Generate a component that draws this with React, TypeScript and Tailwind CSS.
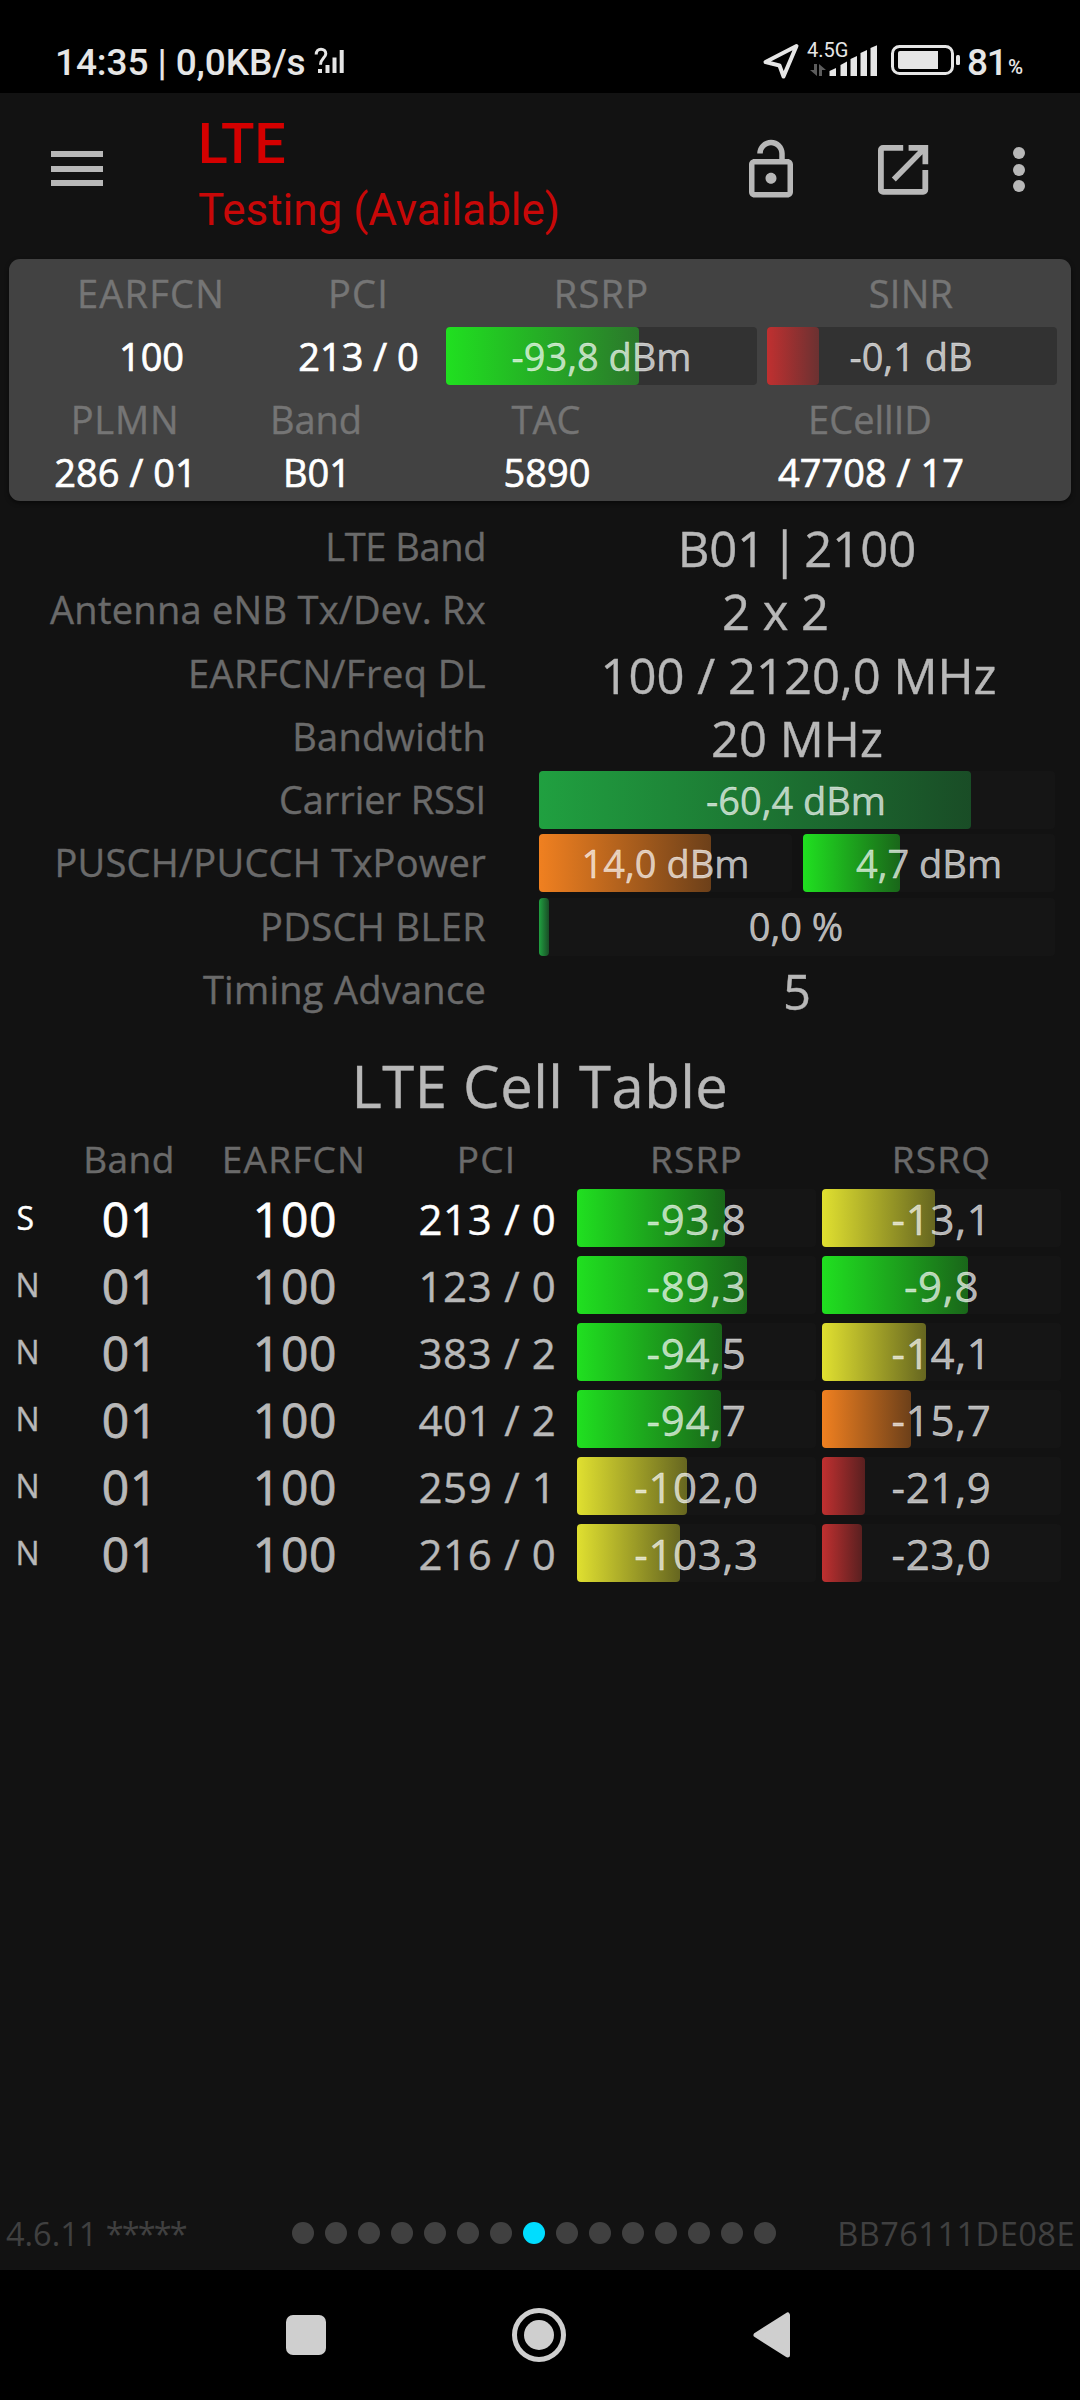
import type { ReactNode } from "react";
import { MdOutlineLockOpen } from "react-icons/md";

type Tone = "green" | "forest" | "yellow" | "orange" | "red";

const tones: Record<Tone, string> = {
  green: "from-[#20e020] to-[#20e020]/40",
  forest: "from-[#20a040] to-[#20a040]/40",
  yellow: "from-[#e0e030] to-[#e0e030]/40",
  orange: "from-[#f08020] to-[#f08020]/40",
  red: "from-[#c03030] to-[#c03030]/40",
};

function Bar({ tone, fill, className = "", children }: { tone: Tone; fill: number; className?: string; children: ReactNode }) {
  return (
    <div className={`relative flex h-[58px] shrink-0 items-center justify-center rounded-[4px] ${className}`}>
      <div className={`absolute inset-y-0 left-0 rounded-[4px] bg-linear-to-r ${tones[tone]}`} style={{ width: fill }} />
      <span className="relative whitespace-pre text-white/70">{children}</span>
    </div>
  );
}

function StatusBar() {
  return (
    <div className="flex h-[93px] shrink-0 items-start bg-black pr-[55px] pl-[55px] text-[#e6e6e6]" style={{ fontFamily: "Roboto, sans-serif" }}>
      <span className="mt-[41px] w-[259px] text-[37px] leading-[44px] font-medium tracking-[-0.1px] whitespace-nowrap">14:35 | 0,0KB/s</span>
      <svg className="mt-[47px] shrink-0" width="31" height="27" viewBox="0 0 31 27" fill="none">
        <path d="M2.200 7.500C2.200 3.800 4.200 2.200 7 2.200s4.800 1.700 4.800 4.500c0 4.300-5.300 4.800-5.300 11" stroke="#e6e6e6" strokeWidth="3" />
        <path d="M4 22h4v4H4zM11.500 18h4v8h-4zM18.500 10.500h4v15.500h-4zM25.700 3h4v23h-4z" fill="#e6e6e6" />
      </svg>
      <div className="grow" />
      <svg className="mt-[42px] shrink-0" width="38" height="39" viewBox="0 0 38 39" fill="none" stroke="#e6e6e6" strokeWidth="4" strokeLinejoin="round">
        <path d="M34.500 4L3.500 20l14 3.500 4 11z" />
      </svg>
      <div className="mt-[39px] ml-[7px] flex h-[38px] w-[22px] flex-col">
        <span className="text-[20px] leading-[23px]">4.5G</span>
        <svg className="mt-[2px] ml-[3px] shrink-0" width="17" height="12" viewBox="0 0 17 12" fill="#5c5c5c">
          <path d="M4 0h3v12L0 6h4zM9 12h3V6h4L9 0z" />
        </svg>
      </div>
      <svg className="mt-[45px] shrink-0" width="49" height="31" viewBox="0 0 49 31" fill="#e6e6e6">
        <path d="M0.500 26l6.500-3v8h-6.500zM11.500 20l6.500-3.500V31h-6.500zM21.500 14l6.500-3v20h-6.500zM31.500 8l6.500-3v26h-6.500zM41.500 3L48 .2V31h-6.500z" />
      </svg>
      <svg className="mt-[45px] ml-[13px] shrink-0" width="70" height="30" viewBox="0 0 70 30" fill="none">
        <rect x="1.500" y="1.500" width="60" height="27" rx="7" stroke="#e6e6e6" strokeWidth="3" />
        <path d="M9 6h38v18H9a2 2 0 0 1-2-2V8a2 2 0 0 1 2-2z" fill="#e6e6e6" />
        <rect x="65" y="10" width="4" height="10" rx="1.500" fill="#e6e6e6" />
      </svg>
      <span className="mt-[41px] ml-[6px] w-[41px] text-[37px] leading-[44px] font-medium tracking-[-1.200px]">81</span>
      <span className="mt-[54px] w-[17px] text-[20.500px] leading-[26px] font-medium">%</span>
    </div>
  );
}

function OpenIcon() {
  return (
    <svg width="51" height="50" viewBox="0 0 51 50" fill="#b8b8b8">
      <path d="M25.200 0H5a5 5 0 0 0-5 5v39.700a5 5 0 0 0 5 5h40.200a5 5 0 0 0 5-5V25h-5.800v18.900H5.800V5.800h19.400z" />
      <path d="M30.600 0h19.600v19.300h-5.700V9.200L17.800 36.500l-4-4.100L40.200 5.700h-9.600z" />
    </svg>
  );
}

function Header() {
  return (
    <header className="flex h-[166px] shrink-0" style={{ fontFamily: "Roboto, sans-serif" }}>
      <div className="mt-[58px] ml-[51px] flex h-[35px] w-[52px] flex-col justify-between">
        <i className="h-[6px] bg-[#b8b8b8]" />
        <i className="h-[6px] bg-[#b8b8b8]" />
        <i className="h-[6px] bg-[#b8b8b8]" />
      </div>
      <div className="ml-[95px] flex w-[400px] flex-col whitespace-nowrap">
        <h1 className="mt-[18px] text-[55px] leading-[66px] font-medium text-[#d40000]">LTE</h1>
        <p className="text-[44px] leading-[66px] text-[#c80808]">Testing (Available)</p>
      </div>
      <MdOutlineLockOpen className="mt-[44px] ml-[140px] shrink-0 text-[#b8b8b8]" size={66} />
      <div className="mt-[52px] ml-[74px] shrink-0">
        <OpenIcon />
      </div>
      <div className="mt-[54px] ml-[84px] flex h-[45px] flex-col justify-between">
        <i className="size-[12px] rounded-full bg-[#b8b8b8]" />
        <i className="size-[12px] rounded-full bg-[#b8b8b8]" />
        <i className="size-[12px] rounded-full bg-[#b8b8b8]" />
      </div>
    </header>
  );
}

function ServingCard() {
  return (
    <section className="mx-[9px] flex h-[242px] shrink-0 flex-col rounded-[11px] bg-[#424242] text-center text-[38px] leading-[38px] whitespace-pre shadow-[0_2px_4px_rgba(0,0,0,0.5)]">
      <div className="grid h-[68px] grid-cols-[284px_131px_22px_311px_10px_290px] items-center pb-px tracking-[1.200px] text-[#757575]">
        <span>EARFCN</span>
        <span>PCI</span>
        <span />
        <span>RSRP</span>
        <span />
        <span className="pr-[2px] tracking-[0.300px]">SINR</span>
      </div>
      <div className="grid h-[58px] grid-cols-[284px_131px_22px_311px_10px_290px] items-center text-white">
        <span className="pb-px pl-px [-webkit-text-stroke:0.7px]">100</span>
        <span className="pb-px [-webkit-text-stroke:0.7px]">213 / 0</span>
        <span />
        <Bar tone="green" fill={193} className="bg-[#323232] pb-px">-93,8 dBm</Bar>
        <span />
        <Bar tone="red" fill={52} className="bg-[#323232] pr-[2px] pb-px">-0,1 dB</Bar>
      </div>
      <div className="grid h-[68px] grid-cols-[231px_152px_308px_340px] items-center text-[#757575]">
        <span className="pl-px tracking-[0.800px]">PLMN</span>
        <span>Band</span>
        <span>TAC</span>
        <span>ECellID</span>
      </div>
      <div className="grid h-[38px] grid-cols-[231px_152px_308px_340px] items-center pl-px text-white [-webkit-text-stroke:0.7px]">
        <span>286 / 01</span>
        <span>B01</span>
        <span>5890</span>
        <span>47708 / 17</span>
      </div>
    </section>
  );
}

function DetailRow({ label, tracking = "tracking-[0.270px]", children }: { label: string; tracking?: string; children: ReactNode }) {
  return (
    <div className="flex h-[63.250px] items-center">
      <span className={`w-[486px] pb-[2px] text-right text-[38px] text-[#6a6a6a] ${tracking}`}>{label}</span>
      <div className="ml-[53px] flex w-[516px] items-center justify-center text-[#b8b8b8]">{children}</div>
    </div>
  );
}

function BigValue({ children, className = "" }: { children: ReactNode; className?: string }) {
  return <div className={`flex gap-[6px] pt-[2px] text-[49px] leading-[60px] whitespace-pre ${className}`}>{children}</div>;
}

function Details() {
  return (
    <section className="mt-[14.400px] flex shrink-0 flex-col text-[38px] leading-[52px] whitespace-nowrap">
      <DetailRow label="LTE Band" tracking="tracking-[-0.400px]">
        <BigValue>
          <span>B01</span>
          <span>|</span>
          <span>2100</span>
        </BigValue>
      </DetailRow>
      <DetailRow label="Antenna eNB Tx/Dev. Rx">
        <BigValue className="pr-[43px]">2 x 2</BigValue>
      </DetailRow>
      <DetailRow label="EARFCN/Freq DL" tracking="tracking-[0.450px]">
        <BigValue className="pl-[3px]">100 / 2120,0 MHz</BigValue>
      </DetailRow>
      <DetailRow label="Bandwidth">
        <BigValue>20 MHz</BigValue>
      </DetailRow>
      <DetailRow label="Carrier RSSI" tracking="tracking-[-0.100px]">
        <Bar tone="forest" fill={432} className="w-[516px] bg-[#151515] pr-[2px] pb-px">-60,4 dBm</Bar>
      </DetailRow>
      <DetailRow label="PUSCH/PUCCH TxPower">
        <Bar tone="orange" fill={172} className="w-[253px] bg-[#151515] pb-px">14,0 dBm</Bar>
        <Bar tone="green" fill={97} className="ml-[11px] w-[252px] bg-[#151515] pb-px">4,7 dBm</Bar>
      </DetailRow>
      <DetailRow label="PDSCH BLER" tracking="tracking-[0.400px]">
        <Bar tone="forest" fill={10} className="w-[516px] bg-[#151515] pr-[2px] pb-px">0,0 %</Bar>
      </DetailRow>
      <DetailRow label="Timing Advance">
        <BigValue>5</BigValue>
      </DetailRow>
    </section>
  );
}

type Cell = { pci: string; rsrp: string; rsrpTone: Tone; rsrpFill: number; rsrq: string; rsrqTone: Tone; rsrqFill: number };

const cells: Cell[] = [
  { pci: "213 / 0", rsrp: "-93,8", rsrpTone: "green", rsrpFill: 148, rsrq: "-13,1", rsrqTone: "yellow", rsrqFill: 113 },
  { pci: "123 / 0", rsrp: "-89,3", rsrpTone: "green", rsrpFill: 170, rsrq: "-9,8", rsrqTone: "green", rsrqFill: 146 },
  { pci: "383 / 2", rsrp: "-94,5", rsrpTone: "green", rsrpFill: 145, rsrq: "-14,1", rsrqTone: "yellow", rsrqFill: 104 },
  { pci: "401 / 2", rsrp: "-94,7", rsrpTone: "green", rsrpFill: 144, rsrq: "-15,7", rsrqTone: "orange", rsrqFill: 89 },
  { pci: "259 / 1", rsrp: "-102,0", rsrpTone: "yellow", rsrpFill: 110, rsrq: "-21,9", rsrqTone: "red", rsrqFill: 43 },
  { pci: "216 / 0", rsrp: "-103,3", rsrpTone: "yellow", rsrpFill: 103, rsrq: "-23,0", rsrqTone: "red", rsrqFill: 40 },
];

function CellTable() {
  return (
    <section className="mt-[16px] flex shrink-0 flex-col text-center whitespace-pre">
      <h2 className="h-[97px] text-[58px] leading-[97px] tracking-[0.500px] text-[#b8b8b8]">LTE Cell Table</h2>
      <div className="grid h-[50px] grid-cols-[54px_151px_179px_205px_216px_274px] items-center text-[37px] leading-[46px] tracking-[1.200px] text-[#6a6a6a]">
        <span />
        <span className="pr-px tracking-[0.400px]">Band</span>
        <span className="pr-px">EARFCN</span>
        <span>PCI</span>
        <span className="pr-px">RSRP</span>
        <span className="pr-px">RSRQ</span>
      </div>
      {cells.map((c, i) => (
        <div
          key={c.pci}
          className={`grid h-[67px] grid-cols-[54px_144px_194px_185px_239px_6px_239px] items-center text-[42px] leading-[56px] tracking-[0.700px] ${i === 0 ? "text-white" : "text-[#b8b8b8]"}`}
        >
          <span className={`text-[32px] ${i === 0 ? "pr-[3px]" : "pt-px pl-[2px]"}`}>{i === 0 ? "S" : "N"}</span>
          <span className="pt-[3px] pl-[8px] text-[48px] [-webkit-text-stroke:0.8px]">01</span>
          <span className="pt-[3px] text-[48px] [-webkit-text-stroke:0.8px]">100</span>
          <span className="pt-[2px] pl-[6px]">{c.pci}</span>
          <Bar tone={c.rsrpTone} fill={c.rsrpFill} className="bg-[#151515] pt-[2px]">{c.rsrp}</Bar>
          <span />
          <Bar tone={c.rsrqTone} fill={c.rsrqFill} className="bg-[#151515] pt-[2px]">{c.rsrq}</Bar>
        </div>
      ))}
    </section>
  );
}

function Footer() {
  return (
    <footer className="flex h-[74px] shrink-0 items-center pr-[5px] pl-[6px] text-[32.500px] text-[#404040]">
      <span className="w-[286px] pt-[2px] whitespace-nowrap">
        4.6.11 <span className="tracking-[-1.900px]">*****</span>
      </span>
      <div className="flex gap-[11px]">
        {Array.from({ length: 15 }, (_, i) => (
          <i key={i} className={`size-[22px] rounded-full ${i === 7 ? "bg-[#00ddff]" : "bg-[#404040]"}`} />
        ))}
      </div>
      <span className="grow pt-[2px] text-right tracking-[0.500px]">BB76111DE08E</span>
    </footer>
  );
}

function NavBar() {
  return (
    <nav className="flex h-[130px] shrink-0 items-center bg-black">
      <div className="ml-[286px] size-[40px] rounded-[7px] bg-[#cfcfcf]" />
      <div className="ml-[186px] flex size-[54px] items-center justify-center rounded-full border-[5px] border-[#cfcfcf]">
        <div className="size-[30px] rounded-full bg-[#cfcfcf]" />
      </div>
      <svg className="ml-[187px]" width="38" height="48" viewBox="0 0 38 48" fill="#cfcfcf" stroke="#cfcfcf" strokeWidth="5" strokeLinejoin="round">
        <path d="M34.500 4v40L3 24z" />
      </svg>
    </nav>
  );
}

export default function App() {
  return (
    <main
      className="flex h-[2400px] w-[1080px] flex-col overflow-hidden bg-[#121212]"
      style={{ fontFamily: '"Open Sans", sans-serif' }}
    >
      <StatusBar />
      <Header />
      <div className="flex grow flex-col [-webkit-text-stroke:0.4px]">
        <ServingCard />
        <Details />
        <CellTable />
      </div>
      <Footer />
      <NavBar />
    </main>
  );
}
